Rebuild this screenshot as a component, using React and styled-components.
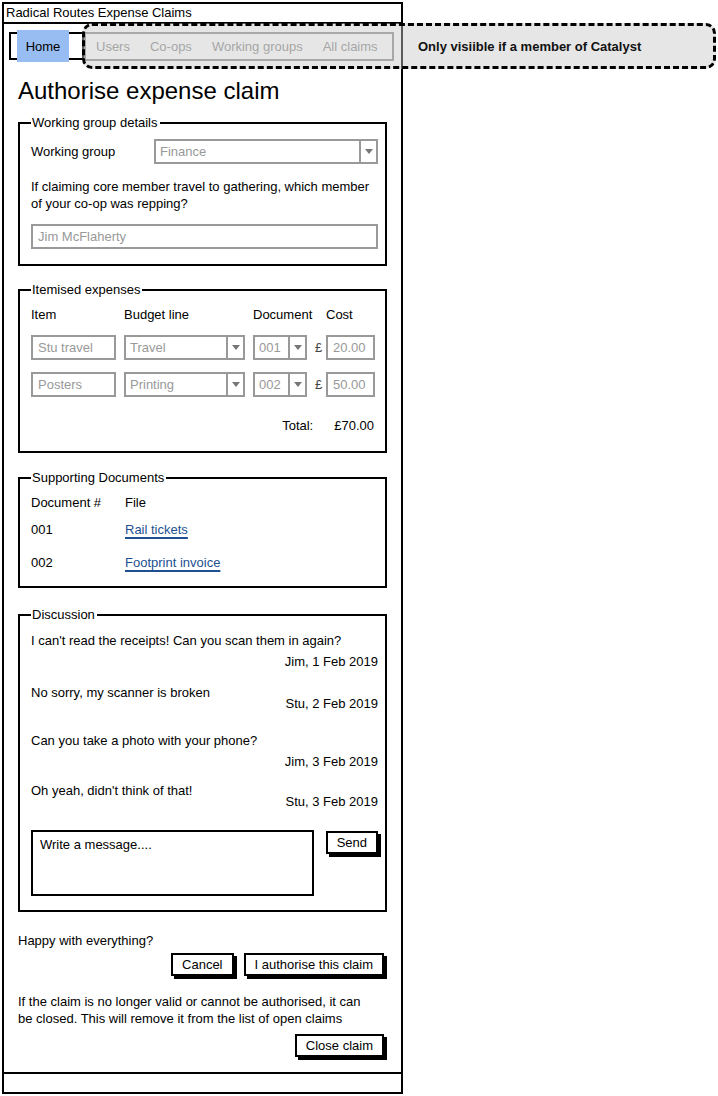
import styled, { createGlobalStyle } from "styled-components";

const GlobalStyle = createGlobalStyle`
  body {
    margin: 0;
    background: #fff;
    color: #000;
    font-family: "Liberation Sans", Arial, sans-serif;
    font-size: 13px;
  }
`;

const messages = [
  { text: "I can't read the receipts! Can you scan them in again?", meta: "Jim, 1 Feb 2019", gap: 9, metaGap: 4 },
  { text: "No sorry, my scanner is broken", meta: "Stu, 2 Feb 2019", gap: 14, metaGap: -6 },
  { text: "Can you take a photo with your phone?", meta: "Jim, 3 Feb 2019", gap: 20, metaGap: 4 },
  { text: "Oh yeah, didn't think of that!", meta: "Stu, 3 Feb 2019", gap: 12, metaGap: -6 },
];

const expenses = [
  { item: "Stu travel", line: "Travel", doc: "001", cost: "20.00" },
  { item: "Posters", line: "Printing", doc: "002", cost: "50.00" },
];

const docs = [
  { no: "001", file: "Rail tickets", gap: 10 },
  { no: "002", file: "Footprint invoice", gap: 16 },
];

const Select = ({ value, width }) => (
  <SelectBox $w={width}>
    <SelectValue>{value}</SelectValue>
    <SelectArrow />
  </SelectBox>
);

export default function App() {
  return (
    <Page>
      <GlobalStyle />
      <Window>
        <TitleBar>Radical Routes Expense Claims</TitleBar>
        <NavRow>
          <HomeFrame>
            <HomeTab>Home</HomeTab>
          </HomeFrame>
          <NavBox>
            <NavItem>Users</NavItem>
            <NavItem>Co-ops</NavItem>
            <NavItem>Working groups</NavItem>
            <NavItem>All claims</NavItem>
          </NavBox>
        </NavRow>

        <Content>
          <Heading>Authorise expense claim</Heading>

          <Section $top={10} $pb={15}>
            <Legend>Working group details</Legend>
            <FieldRow>
              <FieldLabel>Working group</FieldLabel>
              <Select value="Finance" width={224} />
            </FieldRow>
            <Question>
              If claiming core member travel to gathering, which member
              <br />
              of your co-op was repping?
            </Question>
            <TextInput $w={347} $top={12}>Jim McFlaherty</TextInput>
          </Section>

          <Section $top={16} $pb={17}>
            <Legend>Itemised expenses</Legend>
            <ExpenseGrid>
              <ColHead>Item</ColHead>
              <ColHead>Budget line</ColHead>
              <ColHead>Document</ColHead>
              <ColHead $indent={11}>Cost</ColHead>
              {expenses.map((row) => [
                <TextInput key={row.item + "i"} $w={85}>{row.item}</TextInput>,
                <Select key={row.item + "l"} value={row.line} width={121} />,
                <Select key={row.item + "d"} value={row.doc} width={54} />,
                <CostCell key={row.item + "c"}>
                  <Pound>£</Pound>
                  <TextInput $w={49}>{row.cost}</TextInput>
                </CostCell>,
              ])}
            </ExpenseGrid>
            <TotalRow>
              <span>Total:</span>
              <span>£70.00</span>
            </TotalRow>
          </Section>

          <Section $top={17} $pb={15}>
            <Legend>Supporting Documents</Legend>
            <DocRow $gap={8}>
              <span>Document #</span>
              <span>File</span>
            </DocRow>
            {docs.map((d) => (
              <DocRow key={d.no} $gap={d.gap}>
                <span>{d.no}</span>
                <DocLink href="#">{d.file}</DocLink>
              </DocRow>
            ))}
          </Section>

          <Section $top={19} $pb={14}>
            <Legend>Discussion</Legend>
            {messages.map((m) => (
              <Message key={m.meta} $gap={m.gap}>
                <div>{m.text}</div>
                <Meta $gap={m.metaGap}>{m.meta}</Meta>
              </Message>
            ))}
            <ComposeRow>
              <MessageBox>Write a message....</MessageBox>
              <Button $top={1}>Send</Button>
            </ComposeRow>
          </Section>

          <Note $top={20}>Happy with everything?</Note>
          <ButtonRow $top={4}>
            <Button>Cancel</Button>
            <Button>I authorise this claim</Button>
          </ButtonRow>
          <Note $top={17}>
            If the claim is no longer valid or cannot be authorised, it can
            <br />
            be closed. This will remove it from the list of open claims
          </Note>
          <ButtonRow $top={7}>
            <Button>Close claim</Button>
          </ButtonRow>
        </Content>

        <StatusBar />
      </Window>

      <Annotation>Only visiible if a member of Catalyst</Annotation>
    </Page>
  );
}

const Page = styled.div`
  position: relative;
  width: 718px;
  height: 1096px;
  padding: 2px;
  box-sizing: border-box;
`;

const Window = styled.div`
  width: 401px;
  height: 1092px;
  box-sizing: border-box;
  border: 2px solid #000;
  display: flex;
  flex-direction: column;
`;

const TitleBar = styled.div`
  height: 20px;
  box-sizing: border-box;
  border-bottom: 2px solid #000;
  padding-left: 2px;
  line-height: 17px;
`;

const NavRow = styled.div`
  display: flex;
  align-items: flex-start;
  padding-top: 8px;
`;

const HomeFrame = styled.div`
  display: flex;
  align-items: center;
  width: 75px;
  height: 28px;
  box-sizing: border-box;
  margin-left: 5px;
  padding-left: 6px;
  border: 2px solid #000;
`;

const HomeTab = styled.div`
  flex-shrink: 0;
  width: 52px;
  height: 32px;
  background: #97bdf2;
  display: flex;
  align-items: center;
  justify-content: center;
`;

const NavBox = styled.div`
  display: flex;
  align-items: center;
  gap: 20px;
  width: 310px;
  height: 29px;
  box-sizing: border-box;
  padding-left: 10px;
  border: 2px solid #8c8c8c;
  background: #fff;
`;

const NavItem = styled.span`
  color: #8a8a8a;
  white-space: nowrap;
`;

const Annotation = styled.div`
  position: absolute;
  left: 82px;
  top: 23px;
  width: 634px;
  height: 46px;
  box-sizing: border-box;
  display: flex;
  align-items: center;
  padding-left: 333px;
  border: 3px dashed #000;
  border-radius: 10px;
  background: rgba(200, 200, 200, 0.45);
  font-size: 13px;
  font-weight: bold;
  color: #111;
  pointer-events: none;
`;

const Content = styled.div`
  display: flex;
  flex-direction: column;
  padding: 0 14px;
`;

const Heading = styled.h1`
  margin: 16px 0 0;
  font-size: 24px;
  font-weight: normal;
  line-height: 28px;
`;

const Section = styled.fieldset`
  margin: ${(p) => p.$top}px 0 0;
  min-width: 0;
  padding: 0 7px ${(p) => p.$pb ?? 13}px 11px;
  border: 2px solid #000;
`;

const Legend = styled.legend`
  padding: 0 2px 0 1px;
  line-height: 16px;
`;

const FieldRow = styled.div`
  display: flex;
  align-items: center;
  margin-top: 8px;
`;

const FieldLabel = styled.span`
  width: 123px;
`;

const SelectBox = styled.div`
  display: flex;
  width: ${(p) => p.$w}px;
  height: 25px;
  box-sizing: border-box;
  border: 2px solid #999;
  background: #fff;
  color: #999;
`;

const SelectValue = styled.span`
  flex: 1;
  padding-left: 4px;
  line-height: 21px;
  white-space: nowrap;
  overflow: hidden;
`;

const SelectArrow = styled.span`
  width: 15px;
  border-left: 2px solid #999;
  display: flex;
  align-items: center;
  justify-content: center;

  &::after {
    content: "";
    border-left: 4px solid transparent;
    border-right: 4px solid transparent;
    border-top: 5px solid #777;
  }
`;

const TextInput = styled.div`
  width: ${(p) => p.$w}px;
  height: 25px;
  box-sizing: border-box;
  margin-top: ${(p) => p.$top ?? 0}px;
  padding-left: 5px;
  border: 2px solid #999;
  color: #999;
  line-height: 21px;
  white-space: nowrap;
`;

const Question = styled.p`
  margin: 14px 0 0;
  line-height: 17px;
`;

const ExpenseGrid = styled.div`
  display: grid;
  grid-template-columns: 85px 121px 54px 60px;
  column-gap: 8px;
  row-gap: 12px;
  align-items: center;
  margin-top: 8px;
`;

const ColHead = styled.span`
  padding-left: ${(p) => p.$indent ?? 0}px;
  line-height: 17px;
  white-space: nowrap;
`;

const CostCell = styled.div`
  display: flex;
  align-items: center;
  gap: 4px;
`;

const Pound = styled.span`
  width: 7px;
  color: #444;
`;

const TotalRow = styled.div`
  display: flex;
  justify-content: flex-end;
  gap: 21px;
  margin-top: 20px;
  padding-right: 4px;
  line-height: 17px;
`;

const DocRow = styled.div`
  display: grid;
  grid-template-columns: 94px 1fr;
  margin-top: ${(p) => p.$gap}px;
  line-height: 17px;
`;

const DocLink = styled.a`
  justify-self: start;
  color: #1d4f91;
  text-decoration: underline;
  text-decoration-thickness: 1.5px;
  text-underline-offset: 3px;
`;

const Message = styled.div`
  display: flex;
  flex-direction: column;
  margin-top: ${(p) => p.$gap}px;
  line-height: 17px;
`;

const Meta = styled.div`
  align-self: flex-end;
  margin-top: ${(p) => p.$gap}px;
`;

const ComposeRow = styled.div`
  display: flex;
  justify-content: space-between;
  align-items: flex-start;
  margin-top: 20px;
`;

const MessageBox = styled.div`
  width: 283px;
  height: 66px;
  box-sizing: border-box;
  padding: 4px 7px;
  border: 2px solid #000;
  line-height: 17px;
`;

const Button = styled.button`
  height: 23px;
  margin-top: ${(p) => p.$top ?? 0}px;
  padding: 0 9px;
  border: 2px solid #000;
  border-radius: 0;
  background: #fff;
  box-shadow: 3px 3px 0 #000;
  font-family: inherit;
  font-size: 13px;
  color: #000;
  line-height: 17px;
`;

const Note = styled.p`
  margin: ${(p) => p.$top}px 0 0;
  line-height: 17px;
`;

const ButtonRow = styled.div`
  display: flex;
  justify-content: flex-end;
  gap: 10px;
  margin-top: ${(p) => p.$top}px;
  padding-right: 3px;
`;

const StatusBar = styled.div`
  margin-top: auto;
  height: 20px;
  box-sizing: border-box;
  border-top: 2px solid #000;
`;
